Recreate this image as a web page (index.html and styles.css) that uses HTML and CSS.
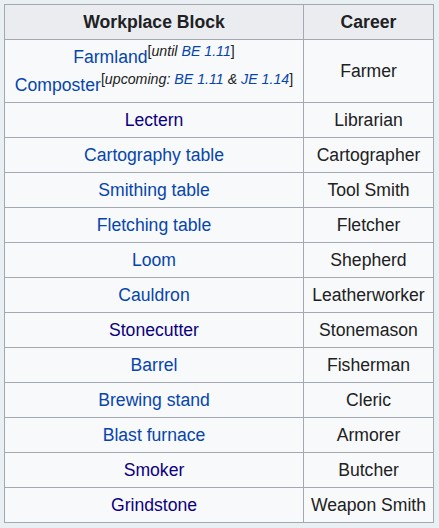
FILE: index.html
```html
<!DOCTYPE html>
<html>
<head>
<meta charset="utf-8">
<link rel="stylesheet" href="styles.css">
</head>
<body>
<table class="wikitable">
  <thead>
    <tr><th class="c1">Workplace Block</th><th class="c2">Career</th></tr>
  </thead>
  <tbody>
    <tr class="tall">
      <td><div class="ln"><a href="#">Farmland</a><sup>[<i>until <a href="#">BE 1.11</a></i>]</sup></div>
          <div class="ln"><a href="#">Composter</a><sup>[<i>upcoming: <a href="#">BE 1.11</a> &amp; <a href="#">JE 1.14</a></i>]</sup></div></td>
      <td>Farmer</td>
    </tr>
    <tr><td><a class="v" href="#">Lectern</a></td><td>Librarian</td></tr>
    <tr><td><a href="#">Cartography table</a></td><td>Cartographer</td></tr>
    <tr><td><a href="#">Smithing table</a></td><td>Tool Smith</td></tr>
    <tr><td><a href="#">Fletching table</a></td><td>Fletcher</td></tr>
    <tr><td><a href="#">Loom</a></td><td>Shepherd</td></tr>
    <tr><td><a href="#">Cauldron</a></td><td>Leatherworker</td></tr>
    <tr><td><a class="v" href="#">Stonecutter</a></td><td>Stonemason</td></tr>
    <tr><td><a href="#">Barrel</a></td><td>Fisherman</td></tr>
    <tr><td><a href="#">Brewing stand</a></td><td>Cleric</td></tr>
    <tr><td><a href="#">Blast furnace</a></td><td>Armorer</td></tr>
    <tr><td><a class="v" href="#">Smoker</a></td><td>Butcher</td></tr>
    <tr><td><a class="v" href="#">Grindstone</a></td><td>Weapon Smith</td></tr>
  </tbody>
</table>
</body>
</html>
```
FILE: styles.css
```css
html, body {
  margin: 0;
  padding: 0;
  background: #eaeff4;
}
body {
  padding: 4px 0 0 4px;
  font-family: "Liberation Sans", Arial, sans-serif;
  font-size: 17.6px;
  color: #202122;
}
.wikitable {
  border-collapse: collapse;
  background: #f8f9fa;
  border: 1px solid #a2a9b1;
  width: 430px;
  table-layout: fixed;
}
.wikitable th, .wikitable td {
  border: 1px solid #a2a9b1;
  text-align: center;
  padding: 0 4px;
  height: 34px;
  line-height: 20px;
}
.wikitable th {
  background: #eaecf0;
  font-weight: bold;
  color: #202122;
}
.c1 { width: 290px; }
.c2 { width: 121px; }
.wikitable tr.tall td { height: 62px; }
.ln { line-height: 28px; height: 28px; white-space: nowrap; }
a { color: #0645ad; text-decoration: none; }
a.v { color: #0b0080; }
sup {
  font-size: 14.2px;
  line-height: 1;
  vertical-align: 7px;
}
sup i { font-style: italic; }
```
